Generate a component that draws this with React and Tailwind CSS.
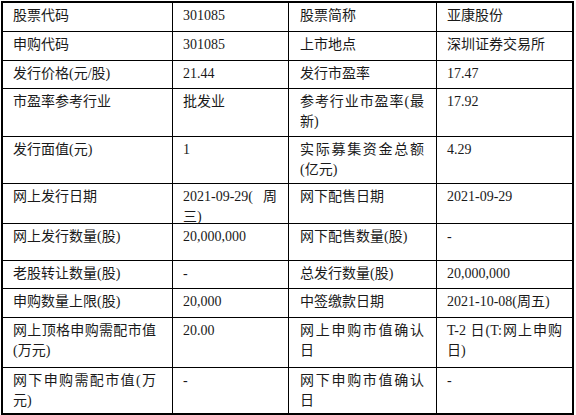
const rows = [
  ["股票代码", "301085", "股票简称", "亚康股份"],
  ["申购代码", "301085", "上市地点", "深圳证券交易所"],
  ["发行价格(元/股)", "21.44", "发行市盈率", "17.47"],
  ["市盈率参考行业", "批发业", "参考行业市盈率(最新)", "17.92"],
  ["发行面值(元)", "1", "实际募集资金总额(亿元)", "4.29"],
  ["网上发行日期", "2021-09-29(周三)", "网下配售日期", "2021-09-29"],
  ["网上发行数量(股)", "20,000,000", "网下配售数量(股)", "-"],
  ["老股转让数量(股)", "-", "总发行数量(股)", "20,000,000"],
  ["申购数量上限(股)", "20,000", "中签缴款日期", "2021-10-08(周五)"],
  ["网上顶格申购需配市值(万元)", "20.00", "网上申购市值确认日", "T-2 日(T:网上申购日)"],
  ["网下申购需配市值(万元)", "-", "网下申购市值确认日", "-"],
];

const cellPad = [
  "pl-[10px] pr-[16px]",
  "pl-[10px] pr-[11px]",
  "pl-[11px] pr-[12px]",
  "pl-[10px] pr-[10px] border-r-0",
];

export default function App() {
  return (
    <div className="h-[415px] w-[576px] bg-white pl-px pt-px">
      <div
        className="grid w-[573px] grid-cols-[170px_116px_148px_135px] grid-rows-[29px_29px_28px_48px_47px_40px_37px_28px_29px_50px_45px] border-2 border-black text-[14px] leading-[20px] text-[#1a1a1a]"
        style={{ fontFamily: '"Liberation Serif", "Noto Sans CJK SC", sans-serif' }}
      >
        {rows.map((row, r) =>
          row.map((text, c) => (
            <div
              key={`${r}-${c}`}
              className={`border-r border-b border-black pt-[3px] text-justify ${cellPad[c]} ${
                r === rows.length - 1 ? "border-b-0" : ""
              }`}
            >
              {text}
            </div>
          ))
        )}
      </div>
    </div>
  );
}
